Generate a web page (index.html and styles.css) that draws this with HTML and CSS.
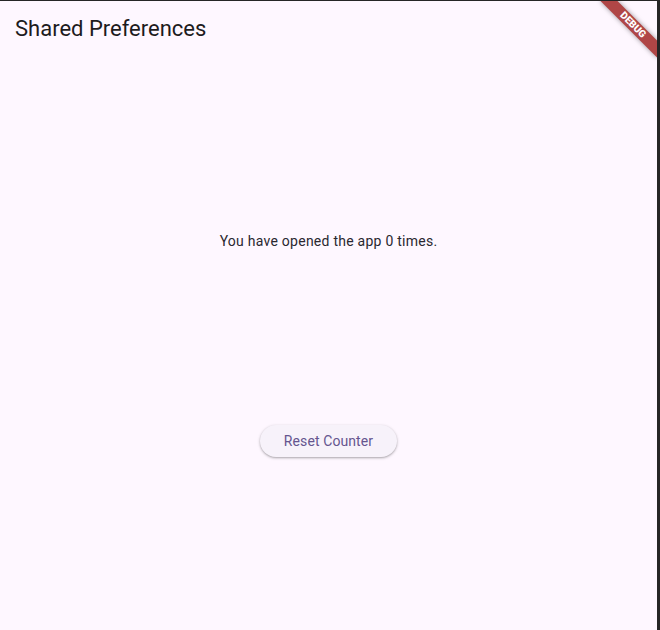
FILE: index.html
```html
<!DOCTYPE html>
<html lang="en">
<head>
<meta charset="utf-8">
<title>Shared Preferences</title>
<link rel="stylesheet" href="styles.css">
</head>
<body>
<div class="window">
  <header class="app-bar">
    <h1 class="title">Shared Preferences</h1>
  </header>
  <main class="content">
    <p class="message">You have opened the app 0 times.</p>
    <button class="reset-btn" type="button">Reset Counter</button>
  </main>
  <div class="debug-banner">DEBUG</div>
</div>
</body>
</html>
```
FILE: styles.css
```css
html, body {
  margin: 0;
  padding: 0;
  background: #262626;
  height: 630px;
  overflow: hidden;
}

body {
  padding-top: 1px;
  box-sizing: border-box;
  font-family: Roboto, "Noto Sans", sans-serif;
}

.window {
  position: relative;
  width: 657px;
  height: 630px;
  background: #fef7ff;
  overflow: hidden;
  display: flex;
  flex-direction: column;
}

.app-bar {
  height: 56px;
  flex: none;
  display: flex;
  align-items: center;
  padding: 0 15px;
}

.title {
  margin: 0;
  font-size: 22px;
  font-weight: 400;
  line-height: 28px;
  color: #1d1b20;
}

.content {
  flex: 1;
  display: flex;
  flex-direction: column;
  align-items: center;
  justify-content: space-evenly;
}

.message {
  margin: 0;
  font-size: 14px;
  line-height: 20px;
  letter-spacing: 0.25px;
  color: #2a2830;
}

.reset-btn {
  height: 32px;
  padding: 0 24px;
  border: none;
  border-radius: 16px;
  background: #f7f2fa;
  color: #65558f;
  font-family: Roboto, "Noto Sans", sans-serif;
  font-size: 14px;
  font-weight: 400;
  letter-spacing: 0.1px;
  box-shadow: 0 1px 2px rgba(0, 0, 0, 0.26), 0 1px 3px 1px rgba(0, 0, 0, 0.07);
}

.debug-banner {
  position: absolute;
  width: 80px;
  height: 12px;
  left: 593px;
  top: 18px;
  transform: rotate(45deg);
  background: #b04646;
  box-shadow: 0 0 5px rgba(0, 0, 0, 0.4);
  color: #fff;
  font-family: Roboto, "Noto Sans", sans-serif;
  font-size: 10px;
  font-weight: 900;
  line-height: 12px;
  text-align: center;
}
```
